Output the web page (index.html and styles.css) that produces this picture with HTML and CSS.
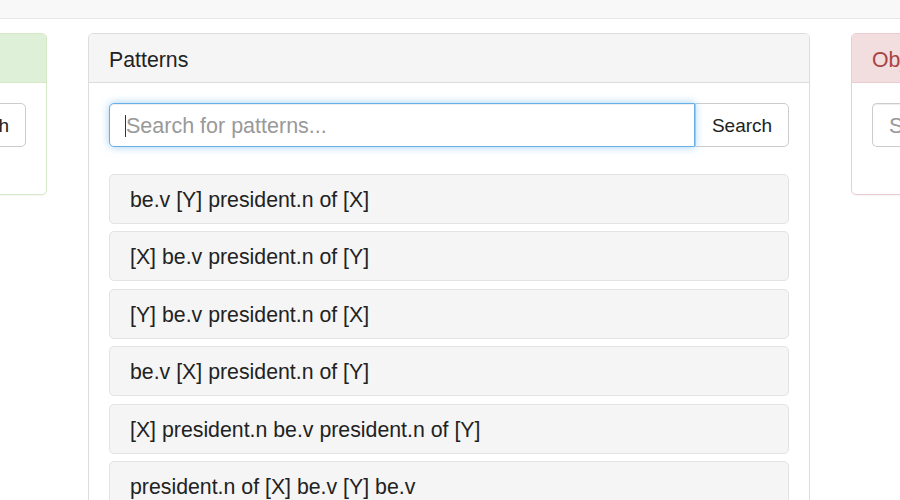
FILE: index.html
```html
<!DOCTYPE html>
<html>
<head>
<meta charset="utf-8">
<link rel="stylesheet" href="styles.css">
</head>
<body>
<div class="navbar"></div>
<div class="columns">
  <div class="panel panel-success">
    <div class="panel-heading">Relations</div>
    <div class="panel-body">
      <div class="input-group">
        <input class="form-control" type="text" placeholder="Search for relations...">
        <button class="btn">Search</button>
      </div>
    </div>
  </div>
  <div class="panel panel-default">
    <div class="panel-heading">Patterns</div>
    <div class="panel-body">
      <div class="input-group">
        <div class="input-wrap">
          <input class="form-control focused" type="text" placeholder="Search for patterns...">
          <span class="caret"></span>
        </div>
        <button class="btn">Search</button>
      </div>
      <div class="list">
        <div class="item">be.v [Y] president.n of [X]</div>
        <div class="item">[X] be.v president.n of [Y]</div>
        <div class="item">[Y] be.v president.n of [X]</div>
        <div class="item">be.v [X] president.n of [Y]</div>
        <div class="item">[X] president.n be.v president.n of [Y]</div>
        <div class="item">president.n of [X] be.v [Y] be.v</div>
      </div>
    </div>
  </div>
  <div class="panel panel-danger">
    <div class="panel-heading">Objects</div>
    <div class="panel-body">
      <div class="input-group">
        <input class="form-control" type="text" placeholder="Search for objects...">
        <button class="btn">Search</button>
      </div>
    </div>
  </div>
</div>
</body>
</html>
```
FILE: styles.css
```css
html, body {
  margin: 0;
  padding: 0;
  background: #fff;
  overflow: hidden;
  height: 500px;
}
body {
  font-family: "Liberation Sans", Arial, sans-serif;
  font-size: 18px;
  color: #333;
}
.navbar {
  height: 18px;
  background: #f8f8f8;
  border-bottom: 1px solid #e7e7e7;
}
.columns {
  display: flex;
  align-items: flex-start;
  gap: 41px;
  margin-top: 14px;
  margin-left: -675px;
}
.panel {
  flex: 0 0 722px;
  box-sizing: border-box;
  width: 722px;
  border: 1px solid #ddd;
  border-radius: 5px;
  background: #fff;
  box-shadow: 0 1px 1px rgba(0,0,0,0.04);
}
.panel-heading {
  padding: 14px 20px 9px;
  line-height: 25px;
  font-size: 21.3px;
  color: #222;
  background: #f5f5f5;
  border-bottom: 1px solid #ddd;
  border-radius: 4px 4px 0 0;
}
.panel-success { border-color: #d6e9c6; }
.panel-success .panel-heading {
  background: #dff0d8;
  border-bottom-color: #d6e9c6;
  color: #3c763d;
}
.panel-danger { border-color: #ebccd1; }
.panel-danger .panel-heading {
  background: #f2dede;
  border-bottom-color: #ebccd1;
  color: #a94442;
}
.panel-body {
  padding: 20px;
}
.input-group {
  display: flex;
  height: 44px;
  margin-bottom: 27px;
}
.input-wrap {
  flex: 1;
  display: flex;
  position: relative;
  z-index: 1;
}
.form-control {
  flex: 1;
  min-width: 0;
  box-sizing: border-box;
  height: 44px;
  margin: 0;
  padding: 2px 16px 0;
  font-family: inherit;
  font-size: 21.5px;
  color: #555;
  border: 1px solid #ccc;
  border-right: none;
  border-radius: 5px 0 0 5px;
  outline: none;
  box-shadow: inset 0 1px 1px rgba(0,0,0,0.075);
}
.form-control::placeholder {
  color: #999;
}
.form-control.focused {
  border: 1px solid #66afe9;
  box-shadow: inset 0 1px 1px rgba(0,0,0,0.075), 0 0 8px rgba(102,175,233,0.6);
}
.caret {
  position: absolute;
  left: 16px;
  top: 12px;
  width: 1px;
  height: 22px;
  background: #333;
}
.btn {
  flex: 0 0 94px;
  box-sizing: border-box;
  height: 44px;
  margin: 0;
  padding: 2px 0 0;
  font-family: inherit;
  font-size: 19px;
  color: #222;
  background: #fff;
  border: 1px solid #ccc;
  border-radius: 0 5px 5px 0;
}
.list {
  display: flex;
  flex-direction: column;
  gap: 7.4px;
}
.item {
  box-sizing: border-box;
  height: 50px;
  padding: 13px 20px 10px;
  line-height: 25px;
  font-size: 21.3px;
  color: #222;
  background: #f5f5f5;
  border: 1px solid #e3e3e3;
  border-radius: 5px;
}
```
